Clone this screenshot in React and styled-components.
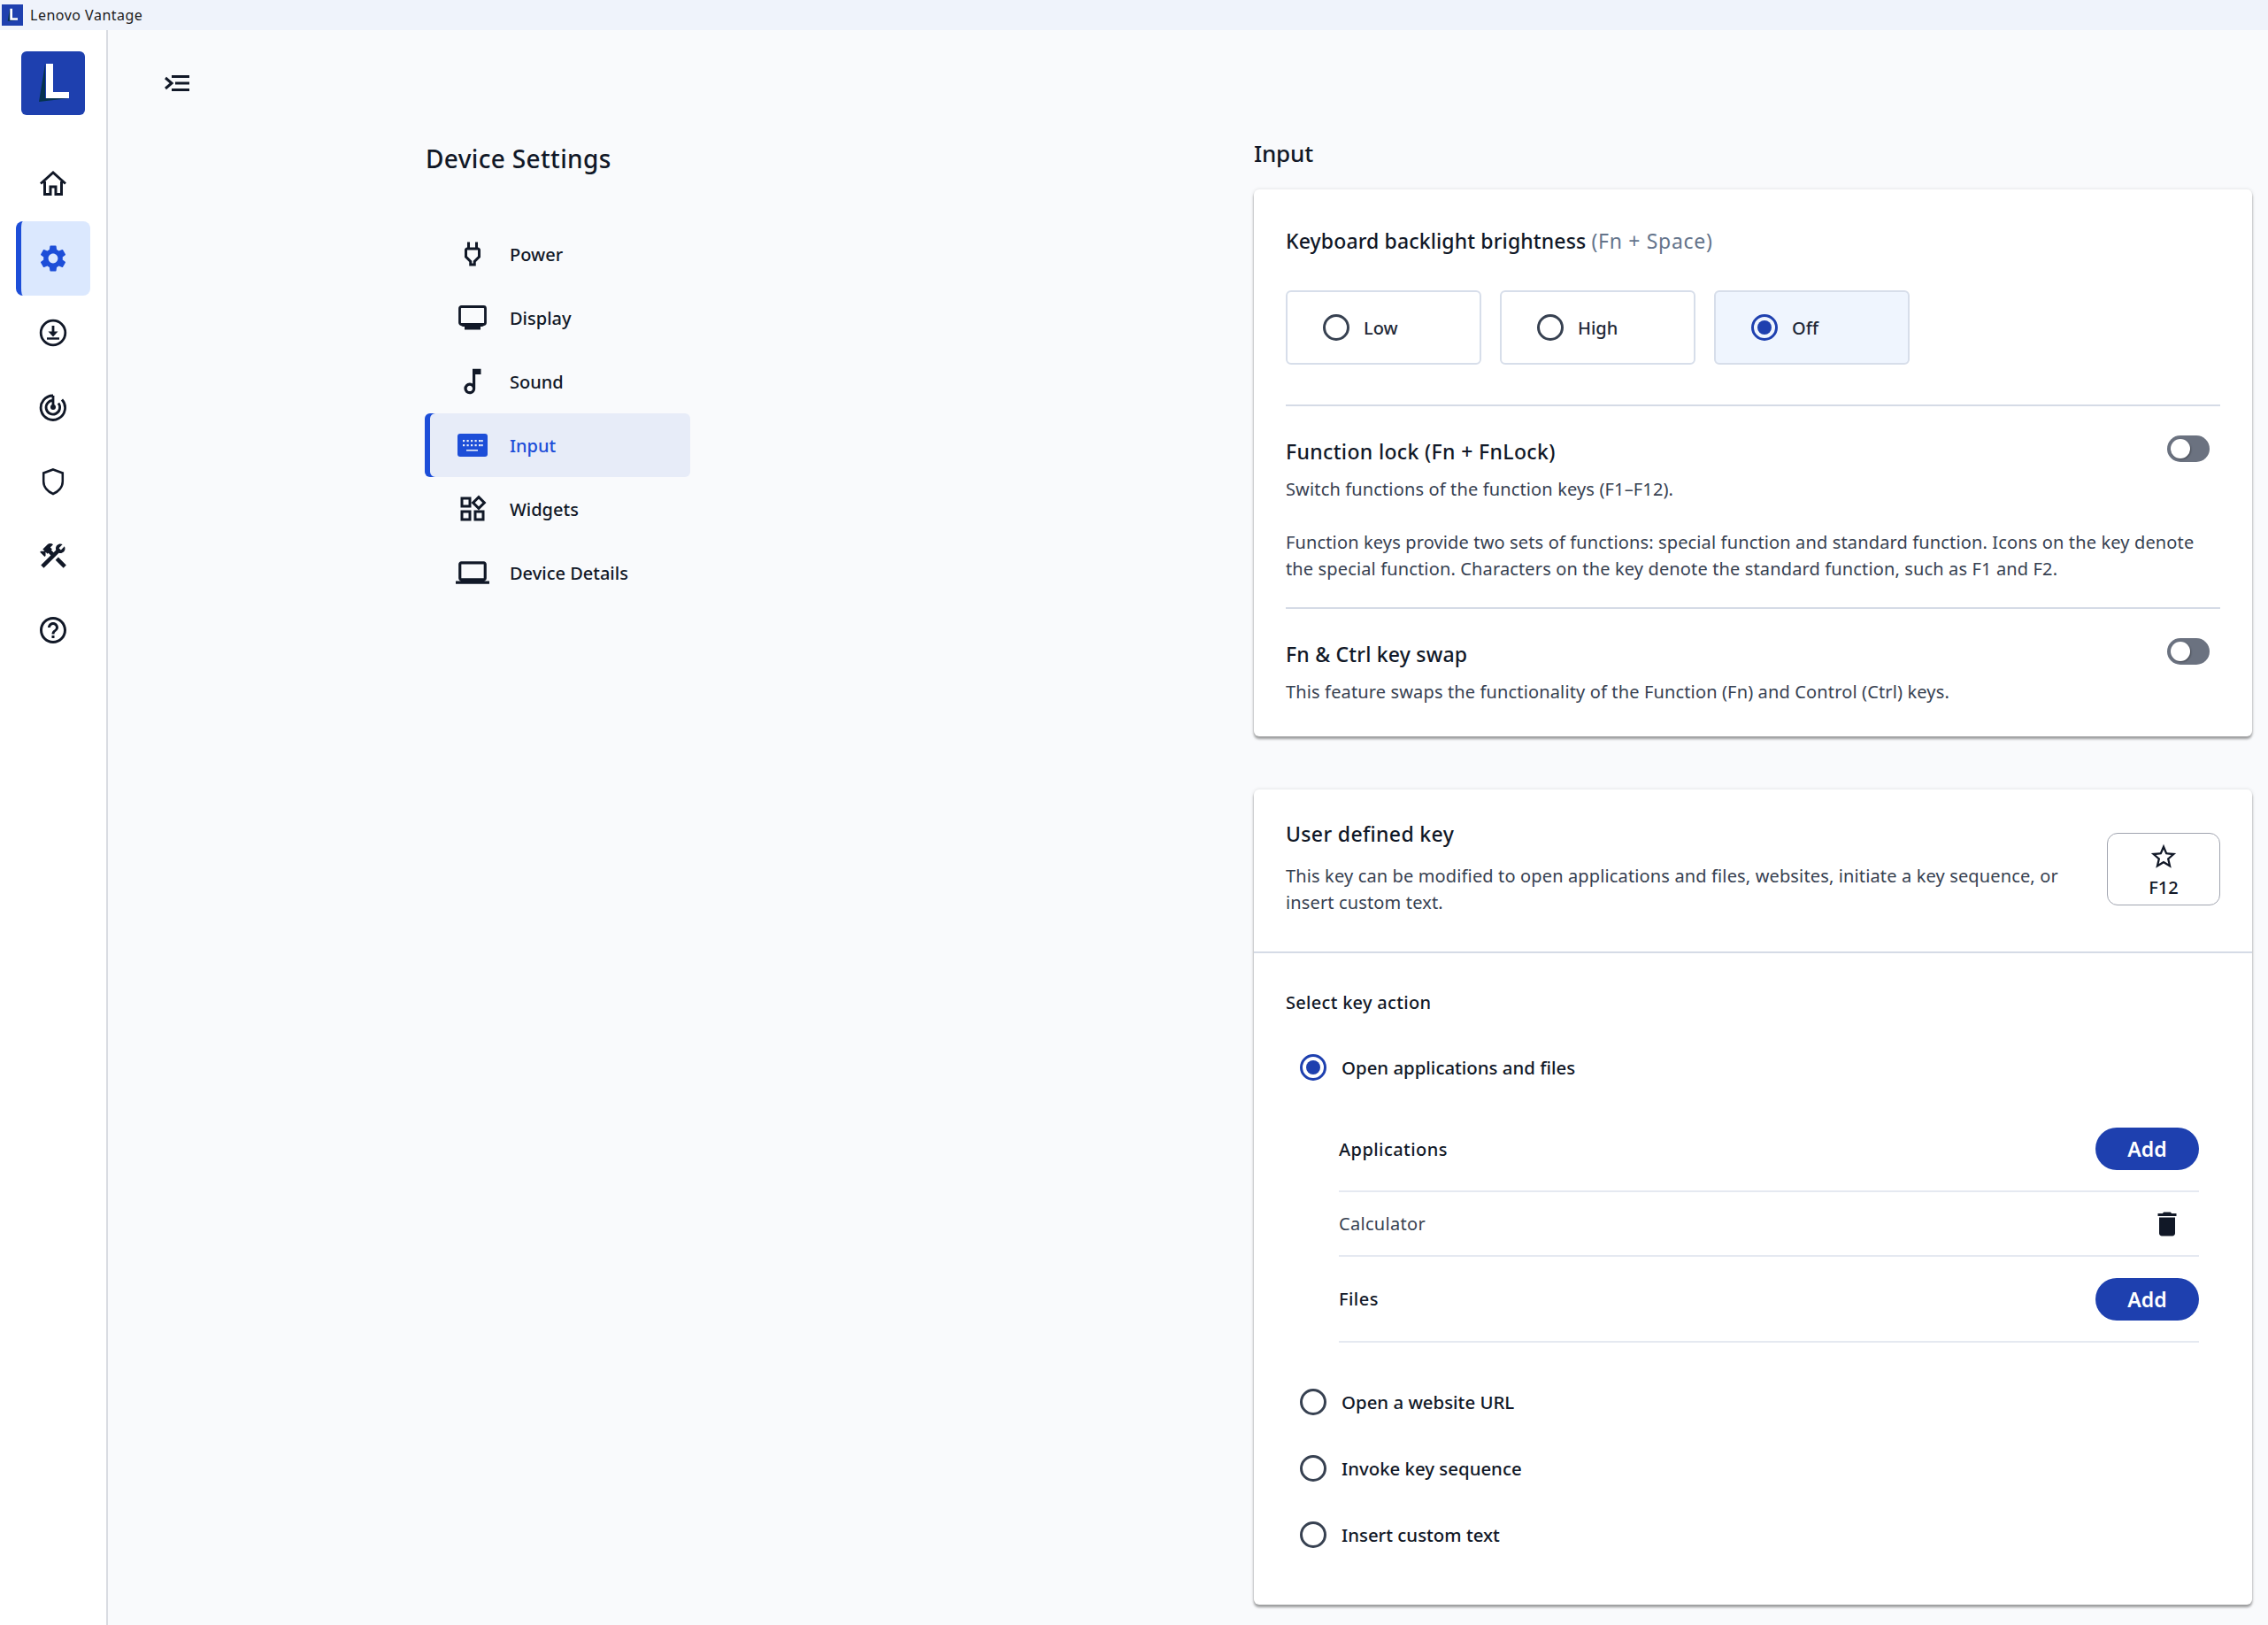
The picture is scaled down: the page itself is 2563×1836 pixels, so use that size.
import React from "react";
import styled, { createGlobalStyle } from "styled-components";
import {
  MdSettings, MdHelpOutline, MdConstruction, MdOutlinePower, MdOutlineMusicNote,
  MdOutlineWidgets, MdOutlineLaptop, MdDelete, MdStarBorder,
} from "react-icons/md";

const Global = createGlobalStyle`
  html, body { margin: 0; padding: 0; background: #f9fafc; }
  * { box-sizing: border-box; }
  body { font-family: "Noto Sans", "Open Sans", sans-serif; color: #111827; }
`;

const Page = styled.div`
  width: 2563px; height: 1836px; overflow: hidden;
  display: flex; flex-direction: column;
`;
const TitleBar = styled.div`
  height: 34px; background: #eff3fb; display: flex; align-items: center;
  padding-left: 2px; gap: 8px; font-size: 16px; letter-spacing: 0.5px; color: #1a1a1a;
`;
const Body = styled.div`flex: 1; display: flex; min-height: 0;`;
const Sidebar = styled.nav`
  width: 122px; background: #fff; border-right: 2px solid #d9dce2;
  display: flex; flex-direction: column; align-items: center; padding-top: 24px;
`;
const LogoWrap = styled.div`margin-bottom: 36px; line-height: 0;`;
const NavBtn = styled.div`
  width: 84px; height: 84px; border-radius: 8px; display: flex; align-items: center; justify-content: center;
  color: ${p => (p.$active ? "#1d4ed8" : "#111827")};
  background: ${p => (p.$active ? "#dbe8fe" : "transparent")};
  border-left: ${p => (p.$active ? "6px solid #1d4ed8" : "none")};
  padding-right: ${p => (p.$active ? "6px" : "0")};
`;
const Main = styled.main`flex: 1; display: flex; flex-direction: column; min-width: 0;`;
const MenuBtn = styled.div`
  height: 51px; padding: 51px 0 0 64px; line-height: 0; overflow: visible; color: #111827;
`;
const Columns = styled.div`display: flex; flex: 1; padding: 0 18px 0 358px;`;
const LeftCol = styled.section`width: 937px; padding-top: 75px;`;
const RightCol = styled.section`flex: 1; min-width: 0; padding-top: 70px;`;
const PageTitle = styled.h1`
  margin: 0; font-weight: 500; font-size: 28px; line-height: 38px; color: #111827; padding-left: 1px; letter-spacing: 0.35px;
`;
const SubNav = styled.div`margin-top: 53px; width: 300px; display: flex; flex-direction: column;`;
const SubItem = styled.div`
  height: 72px; display: flex; align-items: center; border-radius: 6px;
  font-size: 20px; font-weight: 500; letter-spacing: 0;
  background: ${p => (p.$active ? "#e7ecf8" : "transparent")};
  color: ${p => (p.$active ? "#1d4ed8" : "#111827")};
  box-shadow: ${p => (p.$active ? "inset 6px 0 0 #1d4ed8" : "none")};
`;
const SubIcon = styled.span`
  width: 108px; margin-right: -12px; display: flex; justify-content: center; line-height: 0; flex: none;
`;
const SectionTitle = styled.h2`
  margin: 0 0 23px; font-weight: 500; font-size: 26px; line-height: 36px; letter-spacing: -0.2px;
`;
const Card = styled.div`
  background: #fff; border-radius: 6px;
  box-shadow: 0 3px 3px rgba(0,0,0,.36), 0 0 4px rgba(0,0,0,.12);
  margin-bottom: ${p => p.$mb || 0}px;
`;
const Inset = styled.div`padding: 44px 36px 35px;`;
const CardTitle = styled.div`
  font-size: 23px; line-height: 28px; font-weight: 500; letter-spacing: ${p => p.$ls ?? 0.35}px; color: #111827;
`;
const Hint = styled.span`color: #64748b; font-weight: 400; letter-spacing: 0.7px;`;
const Options = styled.div`display: flex; gap: 21px; margin-top: 42px;`;
const Option = styled.div`
  width: 221px; height: 84px; border-radius: 6px; border: 2px solid #d7deea;
  display: flex; align-items: center; gap: 16px; padding-left: 40px;
  background: ${p => (p.$sel ? "#eff5fe" : "#fff")};
  font-size: 20px; color: #1f2937; font-weight: 500;
`;
const Radio = styled.span`
  width: 30px; height: 30px; border-radius: 50%; flex: none; position: relative;
  border: 3px solid ${p => (p.$on ? "#1e40af" : "#374151")};
  display: flex; align-items: center; justify-content: center;
  &::after { content: ""; width: 16px; height: 16px; border-radius: 50%; background: ${p => (p.$on ? "#1e40af" : "transparent")}; }
`;
const Divider = styled.div`height: 2px; background: #d5dbe6; margin: ${p => p.$m || "0"};`;
const SettingRow = styled.div`
  display: flex; justify-content: space-between; align-items: flex-start; height: 28px; padding-right: 12px;
`;
const Toggle = styled.span`
  width: 48px; height: 30px; border-radius: 15px; background: #6b7280; margin-top: -4px;
  display: flex; align-items: center; padding-left: 4px; flex: none;
  &::before { content: ""; width: 22px; height: 22px; border-radius: 50%; background: #fff; box-shadow: 1px 1px 2px rgba(0,0,0,.35); }
`;
const Desc = styled.p`
  margin: ${p => p.$m || "0"}; font-size: 20px; line-height: 30px; color: #374151; font-weight: 400;
  letter-spacing: 0.14px; max-width: ${p => p.$w || 1035}px;
`;
const Pad = styled.div`padding-top: ${p => p.$t}px;`;
const KeyHead = styled.div`
  display: flex; justify-content: space-between; align-items: flex-start; height: 185px; padding: 36px 36px 0;
  border-bottom: 2px solid #d5dbe6;
`;
const KeyBox = styled.div`
  width: 128px; height: 82px; margin-top: 13px; border: 1.5px solid #a1a5b0; border-radius: 12px;
  display: flex; flex-direction: column; align-items: center; justify-content: center; gap: 5px; padding-top: 3px;
  font-size: 20px; font-weight: 500; line-height: 26px; color: #111827; flex: none;
`;
const ActionBody = styled.div`padding: 43px 36px 0; height: 736px;`;
const ActionLabel = styled.div`font-size: 20px; line-height: 26px; font-weight: 500; color: #111827; letter-spacing: 0.3px;`;
const RadioRow = styled.div`
  display: flex; align-items: center; gap: 17px; padding-left: 16px; height: 30px;
  font-size: 20.4px; font-weight: 500; color: #111827; margin-top: ${p => p.$t || 0}px;
`;
const SubList = styled.div`margin: 30px 24px 0 60px;`;
const SubRow = styled.div`
  height: ${p => p.$h}px; display: flex; justify-content: space-between; align-items: center;
  border-bottom: 2px solid #e5e9f1; letter-spacing: ${p => (p.$muted ? 0.3 : 0.45)}px;
  font-size: 20px; font-weight: ${p => (p.$muted ? 400 : 500)};
  color: ${p => (p.$muted ? "#374151" : "#111827")};
`;
const AddBtn = styled.div`
  width: 117px; height: 48px; border-radius: 24px; background: #1e40af; color: #fff;
  display: flex; align-items: center; justify-content: center; font-size: 23px; font-weight: 600; letter-spacing: 0;
`;
const Trash = styled.span`line-height: 0; margin-right: 18px; color: #111827;`;
const Others = styled.div`margin-top: 52px; display: flex; flex-direction: column; gap: 45px;`;

const LogoIcon = ({ s }) => (
  <svg width={s} height={s} viewBox="0 0 72 72">
    <rect width="72" height="72" rx={s > 30 ? 6 : 0} fill="#1e40af" />
    <path d="M27 14 L20 57 L54 53 L27 53 Z" fill="#05324f" />
    <path d="M28 14 H36 V46 H54 V53 H28 Z" fill="#fff" />
  </svg>
);
const stroke = { fill: "none", stroke: "currentColor", strokeWidth: 2.4 };
const Home = () => (
  <svg width="32" height="32" viewBox="0 0 32 32" {...stroke}>
    <path d="M2 15.5 L16 3 L30 15.5" strokeWidth="3" />
    <path d="M6.5 13 V27.5 H13 V19 H19 V27.5 H25.5 V13" strokeWidth="3" />
  </svg>
);
const DownloadC = () => (
  <svg width="32" height="32" viewBox="0 0 32 32" {...stroke}>
    <circle cx="16" cy="16" r="13.8" strokeWidth="2.8" />
    <path d="M16 8 V17" strokeWidth="2.8" />
    <path d="M10.5 14.5 H21.5 L16 20.5 Z" fill="currentColor" stroke="none" />
    <path d="M9 22.5 H23" strokeWidth="2.4" />
  </svg>
);
const Radar = () => (
  <svg width="32" height="32" viewBox="0 0 32 32" {...stroke} strokeWidth="2.8">
    <path d="M16 3 A13.7 13.7 0 1 0 26 7.5" />
    <path d="M16 8.5 A7.8 7.8 0 1 0 22 11.5" />
    <path d="M16 3 V16" />
    <circle cx="16" cy="16" r="3" fill="currentColor" stroke="none" />
  </svg>
);
const Shield = () => (
  <svg width="32" height="32" viewBox="0 0 32 32" {...stroke}>
    <path d="M16 2.5 L28 6.5 V16 C28 22.5 22.5 27.5 16 30 C9.5 27.5 4 22.5 4 16 V6.5 Z" strokeWidth="2.8" transform="translate(1.6 0) scale(.9 1)" />
  </svg>
);
const MenuIcon = () => (
  <svg width="28" height="18" viewBox="0 0 28 18" fill="none" stroke="currentColor" strokeWidth="3" style={{ display: "block" }}>
    <path d="M1 3 L8 9 L1 15" />
    <path d="M8 1.5 H28 M12 9 H28 M8 16.5 H28" />
  </svg>
);
const DisplayIcon = () => (
  <svg width="32" height="28" viewBox="0 0 32 28" fill="none">
    <rect x="1.5" y="1.5" width="29" height="20" rx="2" stroke="currentColor" strokeWidth="2.8" />
    <path d="M7 24 H25 V27.5 H7 Z" fill="currentColor" />
    <path d="M3 23 H29 L27 24 H5 Z" fill="currentColor" />
  </svg>
);
const KeyboardIcon = () => (
  <svg width="34" height="26" viewBox="0 0 34 26">
    <rect width="34" height="26" rx="3" fill="#1d4ed8" />
    {[6, 10.5, 15, 19.5, 24, 26.5].map(x => <rect key={x} x={x} y="7" width="2.2" height="2.2" fill="#e7ecf8" />)}
    {[6, 10.5, 15, 19.5, 24, 26.5].map(x => <rect key={x} x={x} y="12" width="2.2" height="2.2" fill="#e7ecf8" />)}
    <rect x="10" y="18" width="13" height="1.6" fill="#e7ecf8" />
  </svg>
);

export default function App() {
  return (
    <Page>
      <Global />
      <TitleBar><LogoIcon s={24} />Lenovo Vantage</TitleBar>
      <Body>
        <Sidebar>
          <LogoWrap><LogoIcon s={72} /></LogoWrap>
          <NavBtn><Home /></NavBtn>
          <NavBtn $active><MdSettings size={36} /></NavBtn>
          <NavBtn><DownloadC /></NavBtn>
          <NavBtn><Radar /></NavBtn>
          <NavBtn><Shield /></NavBtn>
          <NavBtn><MdConstruction size={36} /></NavBtn>
          <NavBtn><MdHelpOutline size={36} /></NavBtn>
        </Sidebar>
        <Main>
          <MenuBtn><MenuIcon /></MenuBtn>
          <Columns>
            <LeftCol>
              <PageTitle>Device Settings</PageTitle>
              <SubNav>
                <SubItem><SubIcon><MdOutlinePower size={36} /></SubIcon>Power</SubItem>
                <SubItem><SubIcon><DisplayIcon /></SubIcon>Display</SubItem>
                <SubItem><SubIcon><MdOutlineMusicNote size={38} /></SubIcon>Sound</SubItem>
                <SubItem $active><SubIcon><KeyboardIcon /></SubIcon>Input</SubItem>
                <SubItem><SubIcon><MdOutlineWidgets size={36} /></SubIcon>Widgets</SubItem>
                <SubItem><SubIcon><MdOutlineLaptop size={38} /></SubIcon>Device Details</SubItem>
              </SubNav>
            </LeftCol>
            <RightCol>
              <SectionTitle>Input</SectionTitle>
              <Card $mb={60}>
                <Inset>
                  <CardTitle $ls={0.13}>Keyboard backlight brightness <Hint>(Fn + Space)</Hint></CardTitle>
                  <Options>
                    <Option><Radio />Low</Option>
                    <Option><Radio />High</Option>
                    <Option $sel><Radio $on />Off</Option>
                  </Options>
                  <Divider $m="45px 0 0" />
                  <Pad $t={37}>
                    <SettingRow><CardTitle>Function lock (Fn + FnLock)</CardTitle><Toggle /></SettingRow>
                    <Desc $m="14px 0 0">Switch functions of the function keys (F1–F12).</Desc>
                    <Desc $m="30px 0 0">Function keys provide two sets of functions: special function and standard function. Icons on the key denote the special function. Characters on the key denote the standard function, such as F1 and F2.</Desc>
                  </Pad>
                  <Divider $m="28px 0 0" />
                  <Pad $t={37}>
                    <SettingRow><CardTitle $ls={0.2}>Fn &amp; Ctrl key swap</CardTitle><Toggle /></SettingRow>
                    <Desc $m="14px 0 0">This feature swaps the functionality of the Function (Fn) and Control (Ctrl) keys.</Desc>
                  </Pad>
                </Inset>
              </Card>
              <Card>
                <KeyHead>
                  <div>
                    <CardTitle>User defined key</CardTitle>
                    <Desc $m="19px 0 0" $w={880}>This key can be modified to open applications and files, websites, initiate a key sequence, or insert custom text.</Desc>
                  </div>
                  <KeyBox><MdStarBorder size={34} />F12</KeyBox>
                </KeyHead>
                <ActionBody>
                  <ActionLabel>Select key action</ActionLabel>
                  <RadioRow $t={45}><Radio $on />Open applications and files</RadioRow>
                  <SubList>
                    <SubRow $h={96}>Applications<AddBtn>Add</AddBtn></SubRow>
                    <SubRow $h={73} $muted>Calculator<Trash><MdDelete size={36} /></Trash></SubRow>
                    <SubRow $h={97}>Files<AddBtn>Add</AddBtn></SubRow>
                  </SubList>
                  <Others>
                    <RadioRow><Radio />Open a website URL</RadioRow>
                    <RadioRow><Radio />Invoke key sequence</RadioRow>
                    <RadioRow><Radio />Insert custom text</RadioRow>
                  </Others>
                </ActionBody>
              </Card>
            </RightCol>
          </Columns>
        </Main>
      </Body>
    </Page>
  );
}
